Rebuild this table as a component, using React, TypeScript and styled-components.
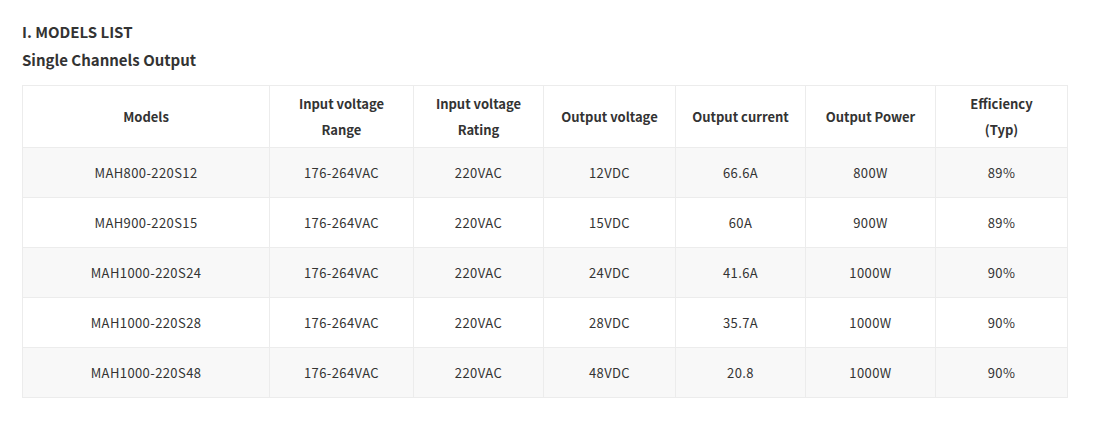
import * as React from "react";
import styled, { createGlobalStyle } from "styled-components";

const GlobalStyle = createGlobalStyle`
  body {
    margin: 0;
    background: #fff;
    font-family: "Noto Sans CJK SC", "Noto Sans", sans-serif;
    color: #333;
  }
`;

const columns = [
  { label: ["Models"], width: 247 },
  { label: ["Input voltage", "Range"], width: 144 },
  { label: ["Input voltage", "Rating"], width: 130 },
  { label: ["Output voltage"], width: 132 },
  { label: ["Output current"], width: 130 },
  { label: ["Output Power"], width: 130 },
  { label: ["Efficiency", "(Typ)"], width: 132 },
];

const rows = [
  ["MAH800-220S12", "176-264VAC", "220VAC", "12VDC", "66.6A", "800W", "89%"],
  ["MAH900-220S15", "176-264VAC", "220VAC", "15VDC", "60A", "900W", "89%"],
  ["MAH1000-220S24", "176-264VAC", "220VAC", "24VDC", "41.6A", "1000W", "90%"],
  ["MAH1000-220S28", "176-264VAC", "220VAC", "28VDC", "35.7A", "1000W", "90%"],
  ["MAH1000-220S48", "176-264VAC", "220VAC", "48VDC", "20.8", "1000W", "90%"],
];

const Page = styled.div`
  padding: 19px 22px 0;
`;

const Title = styled.h2`
  margin: 0;
  font-size: 15px;
  font-weight: 600;
  line-height: 26px;
  color: #333;
`;

const Subtitle = styled.h3`
  margin: 2px 0 12px;
  font-size: 15px;
  font-weight: 600;
  line-height: 26px;
  color: #333;
`;

const Table = styled.table`
  border-collapse: collapse;
  table-layout: fixed;
  border: 1px solid #ececec;
`;

const HeadCell = styled.th<{ $w: number }>`
  width: ${(p) => p.$w - 1}px;
  height: 61px;
  padding: 0;
  border: 1px solid #ececec;
  font-size: 13px;
  font-weight: 600;
  line-height: 26px;
  color: #333;
  text-align: center;
  vertical-align: middle;
`;

const Row = styled.tr<{ $shade: boolean }>`
  background: ${(p) => (p.$shade ? "#f8f8f8" : "#fff")};
`;

const Cell = styled.td`
  height: 49px;
  padding: 0;
  border: 1px solid #ececec;
  font-size: 13px;
  font-weight: 400;
  letter-spacing: 0.4px;
  color: #333;
  text-align: center;
  vertical-align: middle;
`;

export default function App() {
  return (
    <Page>
      <GlobalStyle />
      <Title>I. MODELS LIST</Title>
      <Subtitle>Single Channels Output</Subtitle>
      <Table>
        <thead>
          <tr>
            {columns.map((c, i) => (
              <HeadCell key={i} $w={c.width}>
                {c.label.map((l, j) => (
                  <div key={j}>{l}</div>
                ))}
              </HeadCell>
            ))}
          </tr>
        </thead>
        <tbody>
          {rows.map((r, i) => (
            <Row key={i} $shade={i % 2 === 0}>
              {r.map((v, j) => (
                <Cell key={j}>{v}</Cell>
              ))}
            </Row>
          ))}
        </tbody>
      </Table>
    </Page>
  );
}
